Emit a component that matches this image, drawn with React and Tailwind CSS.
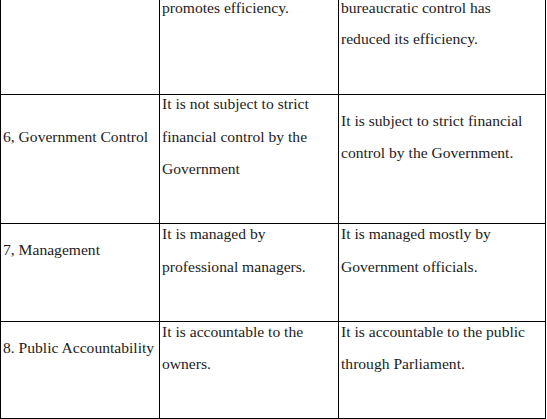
import React from "react";

const rows = [
  {
    h: "h-[129px]",
    label: "6, Government Control",
    a: "It is not subject to strict financial control by the Government",
    b: "It is subject to strict financial control by the Government.",
  },
  {
    h: "h-[98px]",
    label: "7, Management",
    a: "It is managed by professional managers.",
    b: "It is managed mostly by Government officials.",
  },
  {
    h: "h-[97px]",
    label: "8. Public Accountability",
    a: "It is accountable to the owners.",
    b: "It is accountable to the public through Parliament.",
  },
];

const Cell = ({ children, className = "" }) => (
  <div className={`flex items-center border-r border-black pl-[2px] ${className}`}>
    <div className="mb-[44px] leading-[32.5px]">{children}</div>
  </div>
);

const App = () => {
  return (
    <div className="w-[547px] h-[419px] overflow-hidden bg-white [font-family:'Liberation_Serif',serif] text-[15.6px] text-[#1c1c1c]">
      <div className="w-[546px] border-l border-black">
        {/* row 5, only its lower part shows */}
        <div className="flex h-[95px] border-b border-black">
          <div className="w-[159px] shrink-0 border-r border-black" />
          <div className="w-[179px] shrink-0 border-r border-black pl-[2px]">
            <div className="leading-[15px]">promotes efficiency.</div>
          </div>
          <div className="w-[207px] shrink-0 border-r border-black pl-[2px]">
            <div className="leading-[15px]">bureaucratic control has</div>
            <div className="mt-[16px] leading-[15px]">reduced its efficiency.</div>
          </div>
        </div>

        {rows.map((r) => (
          <div key={r.label} className={`flex ${r.h} border-b border-black`}>
            <Cell className="w-[159px] shrink-0 whitespace-nowrap">{r.label}</Cell>
            <Cell className="w-[179px] shrink-0">{r.a}</Cell>
            <Cell className="w-[207px] shrink-0">{r.b}</Cell>
          </div>
        ))}
      </div>
    </div>
  );
};

export default App;
